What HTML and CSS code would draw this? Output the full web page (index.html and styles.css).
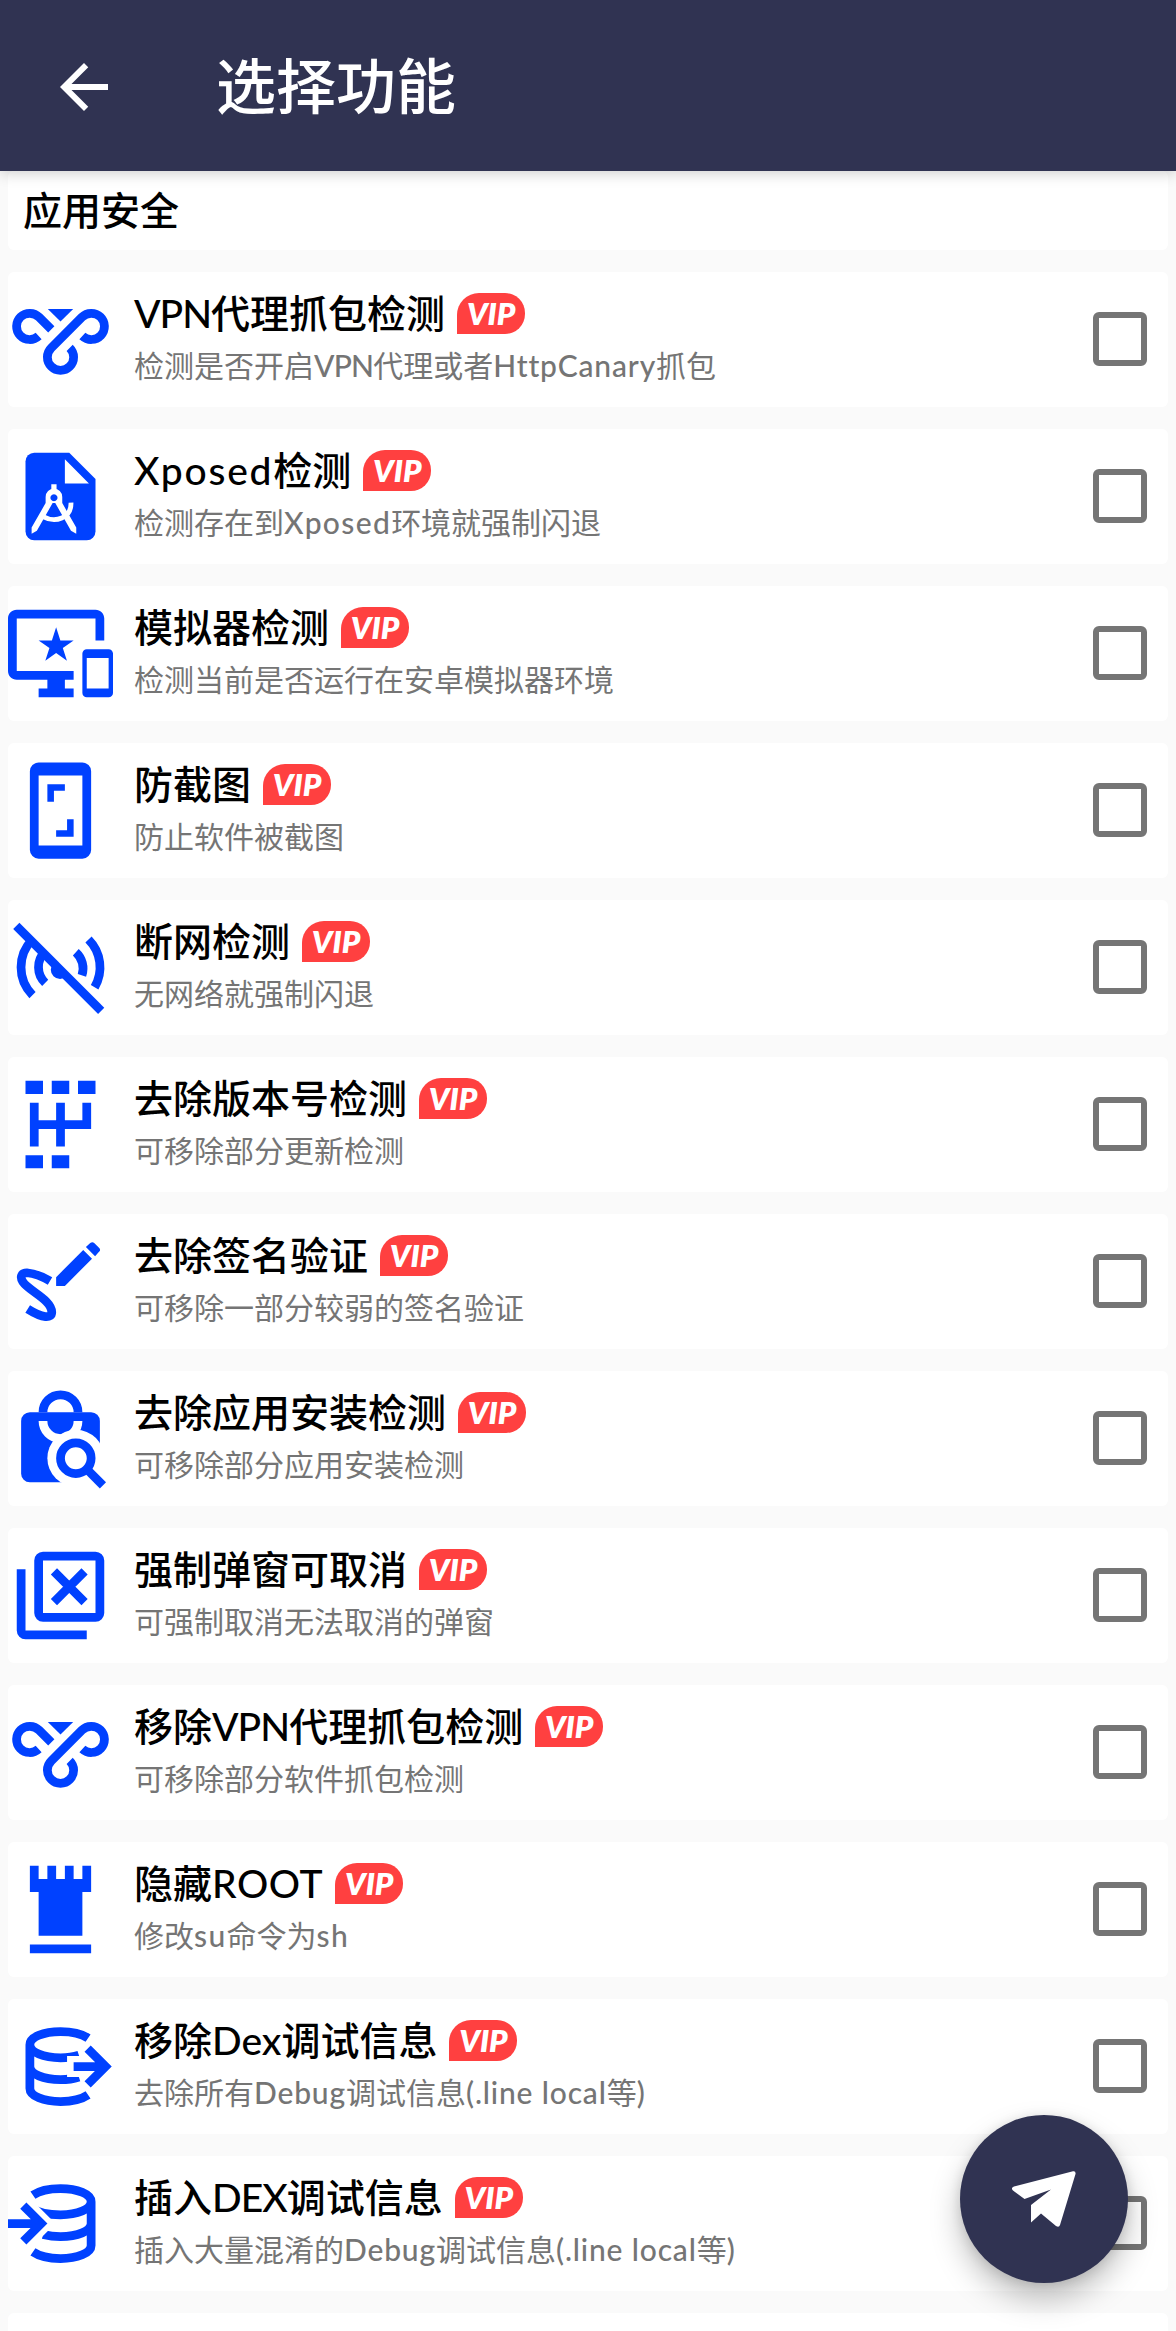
FILE: index.html
```
<!DOCTYPE html>
<html lang="zh-CN">
<head>
    <meta charset="UTF-8">
    <meta name="viewport" content="width=device-width, initial-scale=1.0">
    <title>选择功能</title>
    <link rel="stylesheet" href="styles.css">
</head>
<body>
    <svg class="sprite">
        <!-- vpn -->
        <symbol id="vpn" viewBox="0 0 24 24">
            <g fill="none" stroke="currentColor" stroke-width="2">
                <path d="M7 11.2A3 3 0 1 1 7.1 6.9L9.9 9.7"/>
                <path d="M17 11.2A3 3 0 1 0 16.9 6.9L9.9 13.9A3 3 0 1 0 14.1 13.9"/>
            </g>
            <path d="M9.1 5h5.8L12 7.9z"/>
        </symbol>
        <!-- document with compass -->
        <symbol id="compass" viewBox="0 0 24 24">
            <path d="M6 2h8l6 6v12a2 2 0 0 1-2 2H6a2 2 0 0 1-2-2V4a2 2 0 0 1 2-2z"/>
            <path fill="#fff" d="M13 3.5V9h5.500zM9.900 9.200h1.200v1.500H9.900z"/>
            <path fill="#fff" fill-rule="evenodd" d="M10.500 10.200a1.900 1.900 0 0 1 1.900 1.900v1.400l3.200 5.600v1.400l-1.200-.7-3.600-6.300h-.6l-3.600 6.300-1.200.7v-1.400l3.200-5.600v-1.400a1.900 1.900 0 0 1 1.900-1.900zM10.500 11.500a.8.8 0 1 0 .01 0z"/>
            <path fill="none" stroke="#fff" stroke-width="1.100" d="M8 16.600c2.800 1.500 6.500.4 6.400-3.200"/>
        </symbol>
        <!-- monitor and phone -->
        <symbol id="devices" viewBox="0 0 24 24">
            <path d="M23 11.01L18 11c-.55 0-1 .45-1 1v9c0 .55.45 1 1 1h5c.55 0 1-.45 1-1v-9c0-.55-.45-.99-1-.99zM23 20h-5v-7h5v7zM20 2H2C.89 2 0 2.89 0 4v12c0 1.1.89 2 2 2h7v2H7v2h8v-2h-2v-2h2v-2H2V4h18v5h2V4c0-1.11-.9-2-2-2zm-8.03 7L11 6l-.97 3H7l2.47 1.76-.94 2.91 2.47-1.8 2.47 1.8-.94-2.91L15 9h-3.03z"/>
        </symbol>
        <!-- phone screenshot -->
        <symbol id="screenshot" viewBox="0 0 24 24">
            <path fill-rule="evenodd" d="M7 1h10a2 2 0 0 1 2 2v18a2 2 0 0 1-2 2H7a2 2 0 0 1-2-2V3a2 2 0 0 1 2-2zM7 4v16h10V4z"/>
            <path d="M9 6h4v1.5h-2.5V10H9zM15 18h-4v-1.5h2.5V14H15z"/>
        </symbol>
        <!-- signal off -->
        <symbol id="signal-off" viewBox="0 0 24 24">
            <path d="M10.4 11A2 2 0 0 0 13.400 14z"/>
            <g fill="none" stroke="currentColor" stroke-width="2">
                <path d="M5.6 5.6A9 9 0 0 0 5.6 18.3M8.4 8.4A5 5 0 0 0 8.5 15.5M15.5 8.5A5 5 0 0 1 16.9 13.8M18.4 5.6A9 9 0 0 1 19.8 16.5"/>
                <path d="M1.9 2.5l19.400 19.400"/>
            </g>
        </symbol>
        <!-- version tree -->
        <symbol id="version" viewBox="0 0 24 24">
            <path d="M4 2h4v3H4zM10 2h4v3h-4zM16 2h4v3h-4zM4 19h4v3H4zM10 19h4v3h-4zM5 7h2v4h4V7h2v4h4V7h2v6h-6v4h-2v-4H7v4H5z"/>
        </symbol>
        <!-- signature -->
        <symbol id="sign" viewBox="0 0 24 24">
            <path d="M11 13v-2l6.2-6.2 2 2L13 13zM17.8 4.1l1-.9q.5-.4.9 0l1.1 1.1q.5.5 0 .9l-.9 1z"/>
            <path fill="none" stroke="currentColor" stroke-width="2" d="M9.6 11.9C7.9 10.9 5.600 10.100 4.300 10 3 10 2.700 11 3.400 12.100 4.800 14.200 10 16.200 10 19 10 20.500 8 20.500 4.500 18.300"/>
        </symbol>
        <!-- bag with magnifier -->
        <symbol id="bag" viewBox="0 0 24 24">
            <rect x="3" y="6" width="18" height="16" rx="2"/>
            <path fill="none" stroke="currentColor" stroke-width="2" d="M8 6a4 4 0 0 1 8 0"/>
            <path fill="none" stroke="#fff" stroke-width="2" d="M8 8a4 4 0 0 0 8 0"/>
            <circle cx="15.5" cy="16.5" r="6.5" fill="#fff"/>
            <path fill="#fff" d="M15.5 16H22v7h-6.5z"/>
            <circle cx="15.5" cy="16.5" r="3.5" fill="none" stroke="currentColor" stroke-width="2"/>
            <path stroke="currentColor" stroke-width="2" d="M17.8 18.8l3.9 3.9"/>
        </symbol>
        <!-- stacked windows -->
        <symbol id="windows" viewBox="0 0 24 24">
            <g fill="none" stroke="currentColor" stroke-width="2">
                <rect x="7" y="3" width="14" height="14" rx="1"/>
                <path d="M3 6v14a1 1 0 0 0 1 1h14M10.5 6.5l7 7M17.5 6.5l-7 7"/>
            </g>
        </symbol>
        <!-- rook -->
        <symbol id="rook" viewBox="0 0 24 24">
            <path d="M5 2h2v3h2V2h2v3h2V2h2v3h2V2h2v6h-2v10H7V8H5zM5 20h14v2H5z"/>
        </symbol>
        <!-- database export -->
        <symbol id="db-out" viewBox="0 0 24 24">
            <g fill="none" stroke="currentColor" stroke-width="2">
                <path d="M18.3 5.5C17 4.6 14.6 4 12 4 8.1 4 5 5.3 5 7v10c0 1.7 3.1 3 7 3 2.6 0 5-.6 6.3-1.5M5 7c0 1.7 3.1 3 7 3 1.6 0 3-.2 4.2-.6M5 12c0 1.7 3.1 3 7 3 1.6 0 3-.2 4.2-.6"/>
                <path stroke="#fff" stroke-width="4.8" d="M13.5 12H20"/>
                <path d="M15 12h7M18.2 7.900l4.100 4.100-4.100 4.100"/>
            </g>
        </symbol>
        <!-- database import -->
        <symbol id="db-in" viewBox="0 0 24 24">
            <g fill="none" stroke="currentColor" stroke-width="2">
                <path d="M5.7 5.5C7 4.6 9.4 4 12 4c3.9 0 7 1.3 7 3v10c0 1.7-3.1 3-7 3-2.6 0-5-.6-6.3-1.5M5.500 8.500C6.700 9.400 9.200 10 12 10c3.900 0 7-1.300 7-3M8 14.500c1.200.3 2.500.5 4 .5 3.900 0 7-1.300 7-3"/>
                <path stroke="#fff" stroke-width="4" d="M4 8l4 4-4 4"/>
                <path d="M0 12h7M3.5 7.900L7.600 12l-4.100 4.100"/>
            </g>
        </symbol>
    </svg>

    <header class="toolbar">
        <svg class="back" viewBox="0 0 24 24"><path d="M20 11H7.83l5.59-5.59L12 4l-8 8 8 8 1.410-1.410L7.830 13H20v-2z"/></svg>
        <h1>选择功能</h1>
    </header>

    <main class="list">
        <h2 class="section">应用安全</h2>

        <div class="item">
            <svg class="icon"><use href="#vpn"/></svg>
            <div class="text">
                <div class="title"><span><span class="caps">VPN</span>代理抓包检测</span><i class="vip">VIP</i></div>
                <p>检测是否开启<span class="caps">VPN</span>代理或者<span class="latin">HttpCanary</span>抓包</p>
            </div>
            <span class="check"></span>
        </div>

        <div class="item">
            <svg class="icon"><use href="#compass"/></svg>
            <div class="text">
                <div class="title"><span><span class="wide">Xposed</span>检测</span><i class="vip">VIP</i></div>
                <p>检测存在到<span class="wide">Xposed</span>环境就强制闪退</p>
            </div>
            <span class="check"></span>
        </div>

        <div class="item">
            <svg class="icon"><use href="#devices"/></svg>
            <div class="text">
                <div class="title"><span>模拟器检测</span><i class="vip">VIP</i></div>
                <p>检测当前是否运行在安卓模拟器环境</p>
            </div>
            <span class="check"></span>
        </div>

        <div class="item">
            <svg class="icon"><use href="#screenshot"/></svg>
            <div class="text">
                <div class="title"><span>防截图</span><i class="vip">VIP</i></div>
                <p>防止软件被截图</p>
            </div>
            <span class="check"></span>
        </div>

        <div class="item">
            <svg class="icon"><use href="#signal-off"/></svg>
            <div class="text">
                <div class="title"><span>断网检测</span><i class="vip">VIP</i></div>
                <p>无网络就强制闪退</p>
            </div>
            <span class="check"></span>
        </div>

        <div class="item">
            <svg class="icon"><use href="#version"/></svg>
            <div class="text">
                <div class="title"><span>去除版本号检测</span><i class="vip">VIP</i></div>
                <p>可移除部分更新检测</p>
            </div>
            <span class="check"></span>
        </div>

        <div class="item">
            <svg class="icon"><use href="#sign"/></svg>
            <div class="text">
                <div class="title"><span>去除签名验证</span><i class="vip">VIP</i></div>
                <p>可移除一部分较弱的签名验证</p>
            </div>
            <span class="check"></span>
        </div>

        <div class="item">
            <svg class="icon"><use href="#bag"/></svg>
            <div class="text">
                <div class="title"><span>去除应用安装检测</span><i class="vip">VIP</i></div>
                <p>可移除部分应用安装检测</p>
            </div>
            <span class="check"></span>
        </div>

        <div class="item">
            <svg class="icon"><use href="#windows"/></svg>
            <div class="text">
                <div class="title"><span>强制弹窗可取消</span><i class="vip">VIP</i></div>
                <p>可强制取消无法取消的弹窗</p>
            </div>
            <span class="check"></span>
        </div>

        <div class="item">
            <svg class="icon"><use href="#vpn"/></svg>
            <div class="text">
                <div class="title"><span>移除<span class="caps">VPN</span>代理抓包检测</span><i class="vip">VIP</i></div>
                <p>可移除部分软件抓包检测</p>
            </div>
            <span class="check"></span>
        </div>

        <div class="item">
            <svg class="icon"><use href="#rook"/></svg>
            <div class="text">
                <div class="title"><span>隐藏<span class="root">ROOT</span></span><i class="vip">VIP</i></div>
                <p>修改<span class="wide">su</span>命令为<span class="wide">sh</span></p>
            </div>
            <span class="check"></span>
        </div>

        <div class="item">
            <svg class="icon"><use href="#db-out"/></svg>
            <div class="text">
                <div class="title"><span>移除Dex调试信息</span><i class="vip">VIP</i></div>
                <p>去除所有<span class="latin">Debug</span>调试信息<span class="latin">(.line local</span>等<span class="latin">)</span></p>
            </div>
            <span class="check"></span>
        </div>

        <div class="item">
            <svg class="icon"><use href="#db-in"/></svg>
            <div class="text">
                <div class="title"><span>插入<span class="caps">DEX</span>调试信息</span><i class="vip">VIP</i></div>
                <p>插入大量混淆的<span class="latin">Debug</span>调试信息<span class="latin">(.line local</span>等<span class="latin">)</span></p>
            </div>
            <span class="check"></span>
        </div>

        <div class="item"></div>
    </main>

    <button class="fab" aria-label="发送">
        <svg viewBox="0 0 64 56"><path d="M61 .3L2 15.5q-3.5 1.5-1 4L12.5 28 39 18.500 19 34v17.500l10-9L44 55q3 2 4-1L63.500 3q.5-3.200-2.500-2.700z"/></svg>
    </button>
</body>
</html>
```

FILE: styles.css
```
* {
    box-sizing: border-box;
}

body {
    margin: 0;
    height: 2331px;
    overflow: hidden;
    background-color: #fafafa;
    font-family: Lato, "Noto Sans CJK SC", sans-serif;
    color: #000;
}

h1, h2, p {
    margin: 0;
    font-weight: 500;
}

.sprite {
    display: none;
}

.toolbar {
    position: relative;
    display: flex;
    align-items: center;
    gap: 96px;
    height: 171px;
    padding: 0 48px;
    background-color: #303352;
    box-shadow: 0 2px 14px rgba(0, 0, 0, 0.2);
    color: #fff;
}

.toolbar h1 {
    font-size: 60px;
    line-height: 80px;
}

.back {
    width: 72px;
    height: 72px;
    margin-top: 3px;
    fill: #fff;
}

.list {
    display: flex;
    flex-direction: column;
    gap: 22px;
    height: 2160px;
    padding: 0 8px;
    overflow: hidden;
}

.section {
    flex-shrink: 0;
    height: 79px;
    padding: 11px 15px 0;
    border-radius: 6px;
    background-color: #fff;
    font-size: 39px;
    line-height: 56px;
}

.item {
    display: flex;
    align-items: center;
    flex-shrink: 0;
    height: 135px;
    padding-right: 21px;
    border-radius: 6px;
    background-color: #fff;
}

.icon {
    width: 105px;
    height: 105px;
    flex-shrink: 0;
    color: #0041ff;
    fill: currentColor;
}

.text {
    flex: 1;
    height: 135px;
    padding: 13px 0 0 21px;
    white-space: nowrap;
}

.title {
    display: flex;
    align-items: center;
    gap: 12px;
    height: 56px;
    font-size: 39px;
    font-weight: 500;
    line-height: 54px;
}

.text p {
    font-size: 30px;
    font-weight: 400;
    line-height: 48px;
    color: #757575;
}

.caps {
    letter-spacing: -0.025em;
}

.root {
    letter-spacing: 0.015em;
}

.wide {
    letter-spacing: 0.045em;
}

.latin {
    letter-spacing: 0.028em;
}

.text p span {
    font-weight: 500;
}

.vip {
    width: 68px;
    height: 41px;
    border-radius: 22px 20px 20px 0;
    background-color: #ff4040;
    color: #fff;
    font-size: 31px;
    font-weight: 800;
    line-height: 41px;
    text-align: center;
}

.check {
    width: 54px;
    height: 54px;
    margin-bottom: 1px;
    border: 6px solid #757575;
    border-radius: 6px;
}

.fab {
    position: absolute;
    left: 960px;
    top: 2115px;
    display: flex;
    align-items: center;
    justify-content: center;
    width: 168px;
    height: 168px;
    padding: 0;
    border: none;
    border-radius: 50%;
    background-color: #303352;
    box-shadow: 0 16px 30px rgba(0, 0, 0, 0.25), 0 2px 12px rgba(0, 0, 0, 0.12);
}

.fab svg {
    width: 64px;
    height: 56px;
    fill: #fff;
}
```
